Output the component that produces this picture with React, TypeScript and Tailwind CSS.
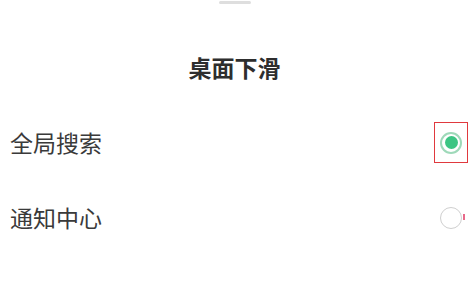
export default function App() {
  return (
    <div
      className="w-full h-[298px] bg-white flex flex-col text-[#333]"
      style={{ fontFamily: '"Noto Sans CJK SC", "Noto Sans", sans-serif' }}
    >
      <div className="mx-auto mt-px w-[32px] h-[3px] rounded-full bg-[#dedede]" />
      <div className="mt-[48px] h-[30px] flex items-center justify-center text-[23px] font-bold leading-none text-[#2e2e2e]">
        桌面下滑
      </div>
      <div className="mt-[23px] h-[75px] flex items-center justify-between pl-[10px] pr-px">
        <span className="text-[23px] leading-none text-[#3a3a3a]">全局搜索</span>
        <div className="w-[34px] h-[41px] border border-[#e0393e] flex items-center justify-center">
          <div className="w-[22px] h-[22px] rounded-full border-2 border-[#9ed9b9] flex items-center justify-center">
            <div className="w-[13px] h-[13px] rounded-full bg-[#3cc583]" />
          </div>
        </div>
      </div>
      <div className="h-[75px] flex items-center justify-between pl-[10px] pr-px">
        <span className="text-[23px] leading-none text-[#3a3a3a]">通知中心</span>
        <div className="w-[34px] h-[41px] flex items-center justify-center relative">
          <div className="w-[22px] h-[22px] rounded-full border-[1.5px] border-[#cfcfcf]" />
          <div className="absolute right-[3px] top-[17px] w-[2px] h-[6px] bg-[#e86a8a]" />
        </div>
      </div>
    </div>
  );
}
